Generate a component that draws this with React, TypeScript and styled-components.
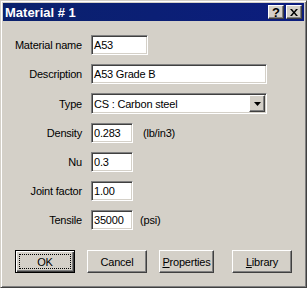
import React from "react";
import styled, { createGlobalStyle, css } from "styled-components";

const Global = createGlobalStyle`
  html, body { margin: 0; padding: 0; background: #d4d0c8; }
  body { font-family: "Liberation Sans", Arial, sans-serif; }
  * { box-sizing: border-box; }
`;

const sunken = css`
  border-style: solid;
  border-width: 1px;
  border-color: #808080 #ffffff #ffffff #808080;
  box-shadow: inset 1px 1px 0 #404040, inset -1px -1px 0 #d4d0c8;
`;

const raised = css`
  border-style: solid;
  border-width: 1px;
  border-color: #ffffff #404040 #404040 #ffffff;
  box-shadow: inset -1px -1px 0 #808080, inset 1px 1px 0 #d4d0c8;
`;

const Window = styled.div`
  width: 307px;
  height: 288px;
  background: #d4d0c8;
  border-style: solid;
  border-width: 1px;
  border-color: #d4d0c8 #404040 #404040 #d4d0c8;
  box-shadow: inset 1px 1px 0 #ffffff, inset -1px -1px 0 #808080;
  padding: 2px 1px 1px 1px;
  display: flex;
  flex-direction: column;
`;

const TitleBar = styled.div`
  height: 18px;
  margin: 0 1px;
  background: linear-gradient(90deg, #0a216c 0%, #0c1d7e 100%);
  display: flex;
  align-items: center;
  padding: 0 2px 0 2px;
`;

const TitleText = styled.div`
  flex: 1;
  color: #ffffff;
  font-weight: bold;
  font-size: 13px;
`;

const CaptionButton = styled.div<{ $ml?: number }>`
  ${raised};
  width: 16px;
  height: 14px;
  background: #d4d0c8;
  display: flex;
  align-items: center;
  justify-content: center;
  font-weight: bold;
  font-size: 13px;
  color: #000;
  margin-left: ${(p) => p.$ml ?? 0}px;
  line-height: 1;
`;

const Content = styled.div`
  padding-top: 14px;
  display: flex;
  flex-direction: column;
  font-size: 11px;
  letter-spacing: -0.2px;
  color: #000;
`;

const Form = styled.div`
  display: grid;
  grid-template-columns: 80px 1fr;
  column-gap: 9px;
  row-gap: 9px;
  align-items: center;
`;

const Label = styled.div`
  text-align: right;
`;

const Field = styled.div`
  display: flex;
  align-items: center;
`;

const TextBox = styled.div<{ $w: number }>`
  ${sunken};
  width: ${(p) => p.$w}px;
  height: 20px;
  background: #ffffff;
  padding: 0 2px;
  display: flex;
  align-items: center;
  white-space: nowrap;
`;

const Select = styled.div`
  ${sunken};
  width: 176px;
  height: 21px;
  background: #ffffff;
  padding: 0 2px 0 2px;
  display: flex;
  align-items: center;
`;

const SelectText = styled.div`
  flex: 1;
`;

const DropButton = styled.div`
  ${raised};
  width: 16px;
  height: 17px;
  background: #d4d0c8;
  display: flex;
  align-items: center;
  justify-content: center;
  margin-right: -1px;
`;

const Unit = styled.div<{ $ml: number }>`
  margin-left: ${(p) => p.$ml}px;
`;

const ButtonRow = styled.div`
  display: flex;
  gap: 12px;
  margin-top: 20px;
  padding-left: 13px;
`;

const Button = styled.div<{ $w: number; $ml?: number; $default?: boolean }>`
  width: ${(p) => p.$w}px;
  height: 23px;
  margin-left: ${(p) => p.$ml ?? 0}px;
  background: #d4d0c8;
  display: flex;
  align-items: center;
  justify-content: center;
  ${(p) =>
    p.$default
      ? css`
          border: 1px solid #000;
          box-shadow: inset 1px 1px 0 #ffffff, inset -1px -1px 0 #404040,
            inset -2px -2px 0 #808080;
        `
      : raised}
`;

const Focus = styled.div`
  position: absolute;
  inset: 3px;
  border: 1px dotted #000;
`;

const ButtonInner = styled.span`
  position: relative;
  display: flex;
  align-items: center;
  justify-content: center;
  width: 100%;
  height: 100%;
`;

const U = styled.span`
  text-decoration: underline;
`;

const rows: { label: string; value: string; w: number }[] = [
  { label: "Material name", value: "A53", w: 57 },
  { label: "Description", value: "A53 Grade B", w: 176 },
];

const numRows: { label: string; value: string; unit?: string; ml?: number }[] = [
  { label: "Density", value: "0.283", unit: "(lb/in3)", ml: 10 },
  { label: "Nu", value: "0.3" },
  { label: "Joint factor", value: "1.00" },
  { label: "Tensile", value: "35000", unit: "(psi)", ml: 7 },
];

export default function App() {
  return (
    <>
      <Global />
      <Window>
        <TitleBar>
          <TitleText>Material # 1</TitleText>
          <CaptionButton>?</CaptionButton>
          <CaptionButton $ml={2}>
            <svg width="8" height="7" viewBox="0 0 8 7">
              <path d="M0 0h2l2 2.5L6 0h2L5 3.5 8 7H6L4 4.5 2 7H0l3-3.5z" fill="#000" />
            </svg>
          </CaptionButton>
        </TitleBar>
        <Content>
          <Form>
            {rows.map((r) => (
              <React.Fragment key={r.label}>
                <Label>{r.label}</Label>
                <Field>
                  <TextBox $w={r.w}>{r.value}</TextBox>
                </Field>
              </React.Fragment>
            ))}
            <Label>Type</Label>
            <Field>
              <Select>
                <SelectText>CS : Carbon steel</SelectText>
                <DropButton>
                  <svg width="7" height="4" viewBox="0 0 7 4">
                    <path d="M0 0h7L3.5 4z" fill="#000" />
                  </svg>
                </DropButton>
              </Select>
            </Field>
            {numRows.map((r) => (
              <React.Fragment key={r.label}>
                <Label>{r.label}</Label>
                <Field>
                  <TextBox $w={42}>{r.value}</TextBox>
                  {r.unit && <Unit $ml={r.ml ?? 8}>{r.unit}</Unit>}
                </Field>
              </React.Fragment>
            ))}
          </Form>
          <ButtonRow>
            <Button $w={60} $default>
              <ButtonInner>
                <Focus />
                OK
              </ButtonInner>
            </Button>
            <Button $w={60}>Cancel</Button>
            <Button $w={55}>
              <span>
                <U>P</U>roperties
              </span>
            </Button>
            <Button $w={60} $ml={6}>
              <span>
                <U>L</U>ibrary
              </span>
            </Button>
          </ButtonRow>
        </Content>
      </Window>
    </>
  );
}
